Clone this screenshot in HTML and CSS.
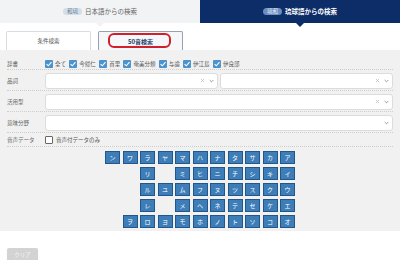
FILE: index.html
```html
<!DOCTYPE html>
<html lang="ja">
<head>
<meta charset="utf-8">
<link rel="stylesheet" href="styles.css">
</head>
<body>
<div class="top">
  <div class="top-tab ja"><span class="badge">和琉</span><span>日本語からの検索</span></div>
  <div class="top-tab ry"><span class="badge">琉和</span><span>琉球語からの検索</span></div>
</div>
<div class="tabs">
  <div class="tab">条件検索</div>
  <div class="tab active">50音検索<span class="mark"></span></div>
</div>
<div class="panel">
  <div class="row row-dict">
    <div class="label">辞書</div>
    <div class="checks">
      <label class="cb"><span class="box on"><svg viewBox="0 0 8 8"><polyline points="1.6,4.2 3.3,5.8 6.5,2.2"/></svg></span>全て</label>
      <label class="cb"><span class="box on"><svg viewBox="0 0 8 8"><polyline points="1.6,4.2 3.3,5.8 6.5,2.2"/></svg></span>今帰仁</label>
      <label class="cb"><span class="box on"><svg viewBox="0 0 8 8"><polyline points="1.6,4.2 3.3,5.8 6.5,2.2"/></svg></span>首里</label>
      <label class="cb"><span class="box on"><svg viewBox="0 0 8 8"><polyline points="1.6,4.2 3.3,5.8 6.5,2.2"/></svg></span>奄美分類</label>
      <label class="cb"><span class="box on"><svg viewBox="0 0 8 8"><polyline points="1.6,4.2 3.3,5.8 6.5,2.2"/></svg></span>与論</label>
      <label class="cb"><span class="box on"><svg viewBox="0 0 8 8"><polyline points="1.6,4.2 3.3,5.8 6.5,2.2"/></svg></span>伊江島</label>
      <label class="cb"><span class="box on"><svg viewBox="0 0 8 8"><polyline points="1.6,4.2 3.3,5.8 6.5,2.2"/></svg></span>伊良部</label>
    </div>
  </div>
  <div class="row row-sel">
    <div class="label">品詞</div>
    <div class="selects">
      <div class="select"><svg class="x" viewBox="0 0 6 6"><path d="M1 1L5 5M5 1L1 5"/></svg><svg class="chev" viewBox="0 0 6 4"><polyline points="0.8,0.8 3,3 5.2,0.8"/></svg></div>
      <div class="select"><svg class="x" viewBox="0 0 6 6"><path d="M1 1L5 5M5 1L1 5"/></svg><svg class="chev" viewBox="0 0 6 4"><polyline points="0.8,0.8 3,3 5.2,0.8"/></svg></div>
    </div>
  </div>
  <div class="row row-sel">
    <div class="label">活用型</div>
    <div class="selects">
      <div class="select"><svg class="x" viewBox="0 0 6 6"><path d="M1 1L5 5M5 1L1 5"/></svg><svg class="chev" viewBox="0 0 6 4"><polyline points="0.8,0.8 3,3 5.2,0.8"/></svg></div>
    </div>
  </div>
  <div class="row row-sel">
    <div class="label">意味分野</div>
    <div class="selects">
      <div class="select"><svg class="chev" viewBox="0 0 6 4"><polyline points="0.8,0.8 3,3 5.2,0.8"/></svg></div>
    </div>
  </div>
  <div class="row row-audio">
    <div class="label">音声データ</div>
    <label class="cb"><span class="box off"></span>音声付データのみ</label>
  </div>
  <div class="kana">
    <div class="k">ン</div><div class="k">ワ</div><div class="k">ラ</div><div class="k">ヤ</div><div class="k">マ</div><div class="k">ハ</div><div class="k">ナ</div><div class="k">タ</div><div class="k">サ</div><div class="k">カ</div><div class="k">ア</div>
    <div class="e"></div><div class="e"></div><div class="k">リ</div><div class="e"></div><div class="k">ミ</div><div class="k">ヒ</div><div class="k">ニ</div><div class="k">チ</div><div class="k">シ</div><div class="k">キ</div><div class="k">イ</div>
    <div class="e"></div><div class="e"></div><div class="k">ル</div><div class="k">ユ</div><div class="k">ム</div><div class="k">フ</div><div class="k">ヌ</div><div class="k">ツ</div><div class="k">ス</div><div class="k">ク</div><div class="k">ウ</div>
    <div class="e"></div><div class="e"></div><div class="k">レ</div><div class="e"></div><div class="k">メ</div><div class="k">ヘ</div><div class="k">ネ</div><div class="k">テ</div><div class="k">セ</div><div class="k">ケ</div><div class="k">エ</div>
    <div class="e"></div><div class="k">ヲ</div><div class="k">ロ</div><div class="k">ヨ</div><div class="k">モ</div><div class="k">ホ</div><div class="k">ノ</div><div class="k">ト</div><div class="k">ソ</div><div class="k">コ</div><div class="k">オ</div>
  </div>
</div>
<div class="footer">
  <button class="clear">クリア</button>
</div>
</body>
</html>
```

FILE: styles.css
```css
* { box-sizing: border-box; margin: 0; padding: 0; }
body {
  width: 400px;
  height: 260px;
  overflow: hidden;
  background: #fff;
  font-family: "Noto Sans CJK JP", "Noto Sans", sans-serif;
  color: #555;
}
.top { display: flex; height: 23px; }
.top-tab {
  flex: 1;
  position: relative;
  display: flex;
  align-items: center;
  justify-content: center;
  gap: 3px;
  font-size: 6.5px;
  line-height: 1;
}
.top-tab.ja { background: #f2f3f5; color: #666; }
.top-tab.ry { background: #0c2d68; color: #fff; font-weight: bold; }
.top-tab::after {
  content: "";
  position: absolute;
  left: 50%;
  top: 100%;
  margin-left: -4px;
  border-left: 4px solid transparent;
  border-right: 4px solid transparent;
  border-top: 4px solid #f2f3f5;
}
.top-tab.ry::after { border-top-color: #0c2d68; }
.badge {
  font-size: 5.5px;
  font-weight: normal;
  padding: 1px 4px;
  border-radius: 4px;
}
.ja .badge { background: #d4dee9; color: #6b7f94; }
.ry .badge { background: #6c8dbf; color: #e6edf6; }

.tabs { display: flex; gap: 7px; padding: 8px 0 0 6px; height: 27px; }
.tab {
  position: relative;
  width: 85px;
  height: 19px;
  display: flex;
  align-items: center;
  justify-content: center;
  font-size: 5.5px;
  color: #555;
  background: #fff;
  border: 1px solid #d8dbdf;
  border-bottom: none;
  border-radius: 2px 2px 0 0;
}
.tab.active {
  background: #f6f7f8;
  border-color: #97a2b0;
  color: #1f3b6a;
  font-weight: bold;
  font-size: 6px;
}
.mark {
  position: absolute;
  left: 9px;
  top: 1px;
  width: 63px;
  height: 15px;
  border: 2px solid #d0202c;
  border-radius: 6px;
}

.panel { background: #f1f1f1; padding: 0 7px 3px; height: 181px; }
.row {
  display: flex;
  align-items: center;
  border-bottom: 1px dotted #cdcdcd;
}
.label { width: 38px; flex: none; font-size: 5.5px; color: #666; }
.row-dict { height: 20px; padding-top: 8px; }
.row-sel { height: 21px; padding-top: 1px; }
.row-audio { height: 14px; }

.checks { display: flex; align-items: center; }
.cb {
  display: flex;
  align-items: center;
  gap: 2px;
  margin-right: 3.3px;
  font-size: 5.5px;
  color: #555;
}
.box {
  width: 8px;
  height: 8px;
  flex: none;
  border-radius: 1px;
  display: flex;
}
.box.on { background: #4b93cc; }
.box.on svg { width: 8px; height: 8px; fill: none; stroke: #fff; stroke-width: 1.1; }
.box.off { background: #fff; border: 1px solid #666; }
.row-audio .cb { gap: 3px; }

.selects { flex: 1; display: flex; gap: 2px; }
.select {
  flex: 1;
  height: 16px;
  background: #fff;
  border: 1px solid #dcdcdc;
  border-radius: 3px;
  display: flex;
  align-items: center;
  justify-content: flex-end;
  gap: 4px;
  padding-right: 3px;
}
.select .x { width: 5px; height: 5px; fill: none; stroke: #bdbdbd; stroke-width: 0.9; }
.select .chev { width: 5px; height: 4px; fill: none; stroke: #7d7d7d; stroke-width: 0.9; }

.kana {
  display: grid;
  grid-template-columns: repeat(11, 15px);
  grid-auto-rows: 13px;
  column-gap: 2.5px;
  row-gap: 3px;
  justify-content: center;
  margin-top: 4px;
}
.k {
  background: #3d7db8;
  border: 1px solid #23568b;
  color: #fff;
  font-size: 6px;
  display: flex;
  align-items: center;
  justify-content: center;
}

.footer { padding: 7px 7px 0; }
.clear {
  width: 31px;
  height: 15px;
  border: none;
  border-radius: 2px;
  background: #d3d3d3;
  color: #f4f4f4;
  font-family: "Noto Sans CJK JP", sans-serif;
  font-size: 5.5px;
  box-shadow: 0 1px 1px rgba(0,0,0,0.15);
}
```
